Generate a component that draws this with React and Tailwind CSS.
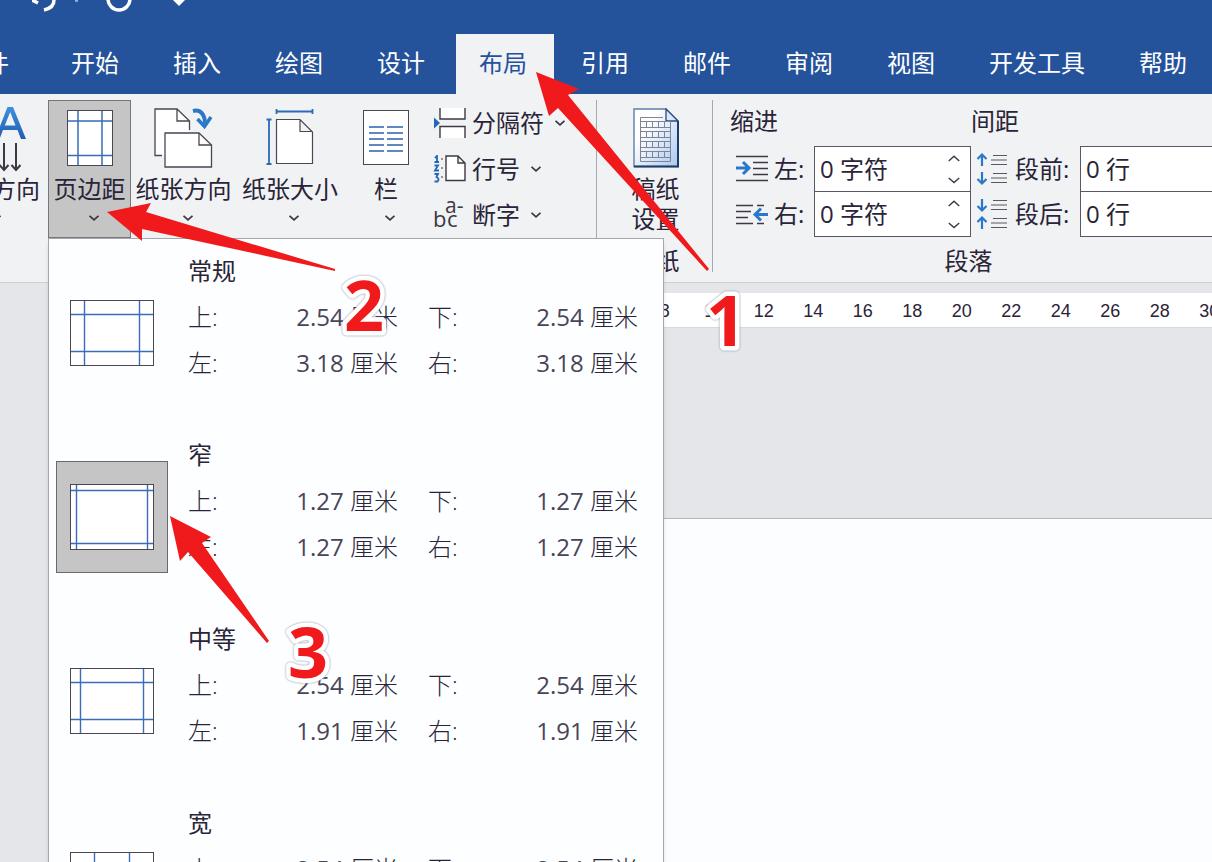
import { useState } from 'react';

const TABS = ['文件', '开始', '插入', '绘图', '设计', '布局', '引用', '邮件', '审阅', '视图', '开发工具', '帮助'];

// x / y are the distances of the guide lines from the thumbnail edges
const MARGINS = [
  { name: '常规', top: '2.54', bottom: '2.54', left: '3.18', right: '3.18', x: 14, y: 14 },
  { name: '窄', top: '1.27', bottom: '1.27', left: '1.27', right: '1.27', x: 6, y: 6 },
  { name: '中等', top: '2.54', bottom: '2.54', left: '1.91', right: '1.91', x: 10, y: 14 },
  { name: '宽', top: '2.54', bottom: '2.54', left: '5.08', right: '5.08', x: 24, y: 14 },
];

const RULER = [8, 10, 12, 14, 16, 18, 20, 22, 24, 26, 28, 30];

function Chevron({ up = false, wide = false }) {
  return (
    <svg width={wide ? 12 : 10} height={wide ? 7 : 6} viewBox="0 0 10 6" fill="none" stroke="#3c3844" strokeWidth={wide ? 1.2 : 1.8}>
      <path d={up ? 'M0.5 5.2 L5 1 L9.5 5.2' : 'M0.5 0.8 L5 4.8 L9.5 0.8'} />
    </svg>
  );
}

function TextDirectionIcon() {
  return (
    <svg width="60" height="66" viewBox="0 0 60 66" fill="none" overflow="visible">
      <defs>
        <linearGradient id="letter" x1="0" y1="0" x2="0" y2="1">
          <stop offset="0" stopColor="#3f8fdc" />
          <stop offset="1" stopColor="#1f5fb0" />
        </linearGradient>
      </defs>
      <path fillRule="evenodd" fill="url(#letter)" d="M33 34 L45.500 2 H51 L64 34 H59 L55.500 25 H41 L37.500 34 Z M42.800 20.500 H53.500 L48.200 7 Z" />
      <path d="M42 38 V65 M37.500 60 L42 65 L46.500 60 M54 38 V65 M49.500 60 L54 65 L58.500 60" stroke="#3c3844" strokeWidth="2" />
    </svg>
  );
}

function MarginsIcon() {
  return (
    <svg width="46" height="56" viewBox="0 0 46 56" fill="none">
      <rect x="0.500" y="0.500" width="45" height="55" fill="#fff" stroke="#4a4654" />
      <path d="M11 1 V55 M35 1 V55 M1 11 H45 M1 45.500 H45" stroke="#3a6cb8" strokeWidth="1.500" />
    </svg>
  );
}

function OrientationIcon() {
  return (
    <svg width="60" height="60" viewBox="0 0 60 60" fill="none" stroke="#4a4654" strokeWidth="1.300">
      <path d="M1.500 1.500 H23 L35 13 V24 H11 V47 H1.500 Z" fill="#fff" stroke="none" />
      <path d="M8 47.500 H1 V1 H23 L35.500 13 V22 M23 1 V13 H35.500" />
      <path d="M11 25 H45 L57.500 37 V59 H11 Z" fill="#fff" />
      <path d="M45 25 V37 H57.500" />
      <path d="M39 3 C47 1 51 7 51 16" stroke="#2b78c8" strokeWidth="4" />
      <path d="M43.500 11 L50.500 18.500 L57 9" stroke="#2b78c8" strokeWidth="3.500" />
    </svg>
  );
}

function PaperSizeIcon() {
  return (
    <svg width="48" height="56" viewBox="0 0 48 56" fill="none" overflow="visible">
      <path d="M10.500 9.500 H34 L46.500 22 V53.500 H10.500 Z M34 9.500 V21.500 H46.500" fill="#fff" stroke="#4a4654" strokeWidth="1.200" />
      <path d="M10.500 1.500 H46.500 M10.500 -1 V4 M46.500 -1 V4 M3 9.500 V54 M0.500 9.500 H5.500 M0.500 54 H5.500" stroke="#2b6cb8" strokeWidth="1.800" />
    </svg>
  );
}

function ColumnsIcon() {
  return (
    <svg width="46" height="56" viewBox="0 0 46 56" fill="none">
      <rect x="0.500" y="0.500" width="45" height="54" fill="#fff" stroke="#4a4654" />
      <path d="M6 17 H21 M24 17 H40 M6 23 H21 M24 23 H40 M6 29 H21 M24 29 H40 M6 35 H21 M24 35 H40 M6 41 H21 M24 41 H40" stroke="#2b62b0" strokeWidth="1.500" />
    </svg>
  );
}

function BreaksIcon() {
  return (
    <svg width="33" height="32" viewBox="0 0 33 32" fill="none">
      <path d="M7 1 V12 H32 V1 M7 31 V19.500 H32 V31" fill="#fff" stroke="#3c3844" strokeWidth="1.400" />
      <path d="M1 10.500 L7 16 L1 21.500 Z" fill="#2466b8" />
    </svg>
  );
}

function LineNumbersIcon() {
  return (
    <svg width="33" height="28" viewBox="0 0 33 28" fill="none">
      <path d="M13 1 H25 L32 8 V25.500 H13 Z M25 1 V8 H32" fill="#fff" stroke="#3c3844" strokeWidth="1.400" />
      <path d="M2 3 L4 1 V7 M1.500 7 H6 M1.500 10.500 H5 L2 15.500 H6 M1.500 19 H5 L3.500 22 Q7 24 4.500 26.500 H1.500" stroke="#2466b8" strokeWidth="1.800" />
      <path d="M9 3 V5 M9 12 V14 M9 21 V23" stroke="#3c3844" />
    </svg>
  );
}

function HyphenIcon() {
  return (
    <svg width="33" height="34" viewBox="0 0 33 34" fontFamily="Open Sans, sans-serif" fill="#3c3844">
      <text x="0" y="29" fontSize="22">b</text>
      <text x="14" y="29" fontSize="22">c</text>
      <text x="12" y="15" fontSize="21">a-</text>
    </svg>
  );
}

function ManuscriptIcon() {
  return (
    <svg width="46" height="60" viewBox="0 0 46 60" fill="none">
      <defs>
        <linearGradient id="sheet" x1="0" y1="0" x2="1" y2="1">
          <stop offset="0.3" stopColor="#ffffff" />
          <stop offset="1" stopColor="#a9c8f0" />
        </linearGradient>
      </defs>
      <path d="M1 1 H33 L45 13 V58.500 H1 Z" fill="url(#sheet)" stroke="#5f7ea8" strokeWidth="1.400" />
      <path d="M1 58.500 H45 V13" stroke="#1f3d6b" strokeWidth="2" />
      <path d="M33 1 V13 H45 Z" fill="#d9e8fb" stroke="#2c4a7a" strokeWidth="1.300" />
      <path
        d="M7.500 9.500 H30 M7.500 9.500 V53.500 H37.500 V14 M7 13.500 H38 M7 19.500 H38 M7 23.500 H38 M7 29.500 H38 M7 33.500 H38 M7 39.500 H38 M7 43.500 H38 M7 49.500 H38 M13.500 14 V19 M19.500 14 V19 M25.500 14 V19 M31.500 14 V19 M13.500 24 V29 M19.500 24 V29 M25.500 24 V29 M31.500 24 V29 M13.500 34 V39 M19.500 34 V39 M25.500 34 V39 M31.500 34 V39 M13.500 44 V49 M19.500 44 V49 M25.500 44 V49 M31.500 44 V49"
        stroke="#7c8496"
      />
    </svg>
  );
}

function IndentLeftIcon() {
  return (
    <svg width="32" height="28" viewBox="0 0 32 28" fill="none">
      <path d="M0 1.500 H32 M17 7.500 H32 M17 13.500 H32 M17 19.500 H32 M0 25.500 H32" stroke="#3c3844" strokeWidth="1.400" />
      <path d="M0 13 H12 M7 7 L13 13 L7 19" stroke="#2b78c8" strokeWidth="3" />
    </svg>
  );
}

function IndentRightIcon() {
  return (
    <svg width="32" height="24" viewBox="0 0 32 24" fill="none">
      <path d="M0 3.500 H17 M21 3.500 H28 M0 9.500 H15 M0 15.500 H12 M0 21.500 H17 M21 21.500 H28" stroke="#3c3844" strokeWidth="1.400" />
      <path d="M32 12.500 H20 M25 6.500 L19 12.500 L25 18.500" stroke="#2b78c8" strokeWidth="3" />
    </svg>
  );
}

function SpacingIcon({ after = false }) {
  return (
    <svg width="32" height="34" viewBox="0 0 32 34" fill="none">
      <path d="M17 3.500 H31 M15 8 H31 M15 12.500 H31 M17 21.500 H31 M15 26 H31 M15 30.500 H31" stroke="#5a5664" strokeWidth="1.200" />
      <path
        d={after
          ? 'M6 2 V14 M1.500 9 L6 13.500 L10.500 9 M6 32 V20 M1.500 25 L6 20.500 L10.500 25'
          : 'M6 14 V2 M1.500 7 L6 2.500 L10.500 7 M6 20 V32 M1.500 27 L6 31.500 L10.500 27'}
        stroke="#2b78c8"
        strokeWidth="2.200"
      />
    </svg>
  );
}

function BigButton({ icon, label, className, ...rest }) {
  return (
    <button type="button" className={`flex h-[138px] shrink-0 flex-col items-center border whitespace-nowrap ${className}`} {...rest}>
      <span className="flex h-[71px] items-center pt-[2px]">{icon}</span>
      <span className="leading-[34px]">{label}</span>
      <span className="flex h-[24px] items-center pl-2"><Chevron /></span>
    </button>
  );
}

function SmallButton({ icon, label }) {
  return (
    <button type="button" className="flex h-[46px] items-center whitespace-nowrap">
      <span className="mr-[6px]">{icon}</span>
      {label}
      <span className="ml-[11px]"><Chevron /></span>
    </button>
  );
}

function SpinField({ id, icon, label, value, labelClass }) {
  const [text, setText] = useState(value);
  return (
    <div className="flex h-[45px] items-center">
      {icon}
      <label htmlFor={id} className={`shrink-0 whitespace-nowrap ${labelClass}`}>{label}</label>
      <div className="flex h-[46px] w-[157px] shrink-0 self-start border border-[#5a5664] bg-white">
        <input
          id={id}
          value={text}
          onChange={e => setText(e.target.value)}
          className="w-[122px] bg-transparent pl-[5px] outline-none"
        />
        <div className="flex flex-1 flex-col">
          <button type="button" aria-label="增加" className="flex flex-1 items-center justify-center"><Chevron up wide /></button>
          <button type="button" aria-label="减少" className="flex flex-1 items-center justify-center"><Chevron wide /></button>
        </div>
      </div>
    </div>
  );
}

function PageThumb({ x, y }) {
  return (
    <svg width="84" height="66" viewBox="0 0 84 66" fill="none">
      <rect x="0.500" y="0.500" width="83" height="65" fill="#fff" stroke="#4a4654" />
      <path
        d={`M${x + 0.5} 1 V65 M${83.5 - x} 1 V65 M1 ${y + 0.5} H83 M1 ${65.5 - y} H83`}
        stroke="#3a6cb8"
        strokeWidth="1.400"
      />
    </svg>
  );
}

function Length({ value }) {
  return (
    <span className="text-right">
      <span className="font-normal text-[#4a4456]">{value}</span> 厘米
    </span>
  );
}

function MarginsMenu({ selected, onSelect }) {
  return (
    <div role="menu" className="absolute top-full left-0 z-10 w-[616px] border border-[#a6a6ac] bg-[#fdfeff] pt-[9px] shadow-md">
      {MARGINS.map(m => (
        <button
          key={m.name}
          type="button"
          role="menuitem"
          onClick={() => onSelect(m.name)}
          className="flex h-[184px] w-full items-start pl-[7px] text-left"
        >
          <span
            className={`mt-[29px] mr-[20px] flex size-[112px] items-center justify-center border ${
              m.name === selected ? 'border-[#6a6870] bg-[#c5c5c6]' : 'border-transparent'
            }`}
          >
            <PageThumb x={m.x} y={m.y} />
          </span>
          <span className="grid grid-cols-[60px_150px_90px_150px] leading-[46px] font-light">
            <span className="col-span-4 font-normal">{m.name}</span>
            <span>上:</span>
            <Length value={m.top} />
            <span className="pl-[30px]">下:</span>
            <Length value={m.bottom} />
            <span>左:</span>
            <Length value={m.left} />
            <span className="pl-[30px]">右:</span>
            <Length value={m.right} />
          </span>
        </button>
      ))}
    </div>
  );
}

function Annotations() {
  return (
    <svg className="pointer-events-none absolute inset-0 z-20 h-full w-full">
      <g fill="#f01a1c">
        <path d="M536 72 L579 89 L568 95 L709 269 L707 271 L558 108 L549 116 Z" />
        <path d="M107 212 L151 203 L146 212 L335 269 L335 271 L142 229 L142 241 Z" />
        <path d="M170 516 L211 537 L202 543 L269 641 L267 643 L188 552 L180 561 Z" />
      </g>
      <g
        className="drop-shadow-[0_0_1px_#8a90a8]"
        fontFamily="Open Sans, sans-serif"
        fontWeight="700"
        fontSize="70"
        fill="#f01a1c"
        stroke="#fff"
        strokeWidth="9"
        strokeLinejoin="round"
        paintOrder="stroke"
      >
        <text x="706" y="346">1</text>
        <text x="344" y="331">2</text>
        <text x="288" y="678">3</text>
      </g>
    </svg>
  );
}

export default function App() {
  const [tab, setTab] = useState('布局');
  const [margin, setMargin] = useState('窄');

  return (
    <div className="relative flex h-screen w-full flex-col overflow-hidden bg-[#e4e6e9] font-['Open_Sans','Noto_Sans_CJK_SC',sans-serif] text-[24px] text-[#2a2438]">
      <header className="shrink-0 bg-[#24539b] text-white">
        <div className="flex h-[34px] items-start pl-[32px]">
          <svg width="160" height="14" viewBox="0 0 160 14" fill="none" stroke="#fff" strokeWidth="3.500">
            <path d="M0 0 L6 3 M12 10 Q22 8 22 0" />
            <circle cx="87" cy="-1" r="11" />
            <path d="M141 0 L147 6 L153 0 Z" fill="#fff" stroke="none" />
            <path d="M43 0 H46" stroke="#9bb4dc" />
          </svg>
        </div>
        <nav className="-ml-[66px] flex h-[60px]">
          {TABS.map(t => (
            <button
              key={t}
              type="button"
              onClick={() => setTab(t)}
              className={`shrink-0 pr-[27px] pb-[2px] whitespace-nowrap first:mr-2 ${
                t === tab ? 'ml-1 bg-[#f1f2f4] pl-[23px] text-[#24509c]' : 'pl-[27px]'
              }`}
            >
              {t}
            </button>
          ))}
        </nav>
      </header>

      <section className="flex h-[189px] shrink-0 items-start border-b border-[#cdd1d5] bg-[#f1f2f4] pt-[6px]">
        <div className="-ml-[60px] flex h-[172px] w-[657px] shrink-0 border-r border-[#a9a8ae]">
          <BigButton icon={<TextDirectionIcon />} label="文字方向" className="mr-[4px] w-[104px] border-transparent" />
          <div className="relative h-[138px]">
            <BigButton
              icon={<MarginsIcon />}
              label="页边距"
              className="w-[83px] border-[#77767c] bg-[#c5c5c6]"
              aria-haspopup="menu"
              aria-expanded="true"
            />
            <MarginsMenu selected={margin} onSelect={setMargin} />
          </div>
          <BigButton icon={<OrientationIcon />} label="纸张方向" className="w-[105px] border-transparent" />
          <BigButton icon={<PaperSizeIcon />} label="纸张大小" className="w-[108px] border-transparent" />
          <BigButton icon={<ColumnsIcon />} label="栏" className="w-[84px] border-transparent" />
          <div className="ml-[5px]">
            <SmallButton icon={<BreaksIcon />} label="分隔符" />
            <SmallButton icon={<LineNumbersIcon />} label="行号" />
            <SmallButton icon={<HyphenIcon />} label="断字" />
          </div>
        </div>

        <div className="flex h-[172px] w-[116px] shrink-0 flex-col items-center border-r border-[#a9a8ae] pl-[2px]">
          <button type="button" className="flex h-[146px] shrink-0 flex-col items-center">
            <span className="flex h-[74px] shrink-0 items-center pt-[2px]"><ManuscriptIcon /></span>
            <span className="leading-[30px]">稿纸<br />设置</span>
          </button>
          <span className="shrink-0 leading-[30px]">稿纸</span>
        </div>

        <div className="flex w-[511px] shrink-0 flex-col">
          <div className="flex">
            <fieldset className="pl-[17px]">
              <legend className="h-[46px] leading-[42px]">缩进</legend>
              <div className="pl-[6px]">
                <SpinField id="indent-left" icon={<IndentLeftIcon />} label="左:" value="0 字符" labelClass="w-[46px] pl-[6px]" />
                <SpinField id="indent-right" icon={<IndentRightIcon />} label="右:" value="0 字符" labelClass="w-[46px] pl-[6px]" />
              </div>
            </fieldset>
            <fieldset>
              <legend className="h-[46px] leading-[42px]">间距</legend>
              <div className="pl-[5px]">
                <SpinField id="space-before" icon={<SpacingIcon />} label="段前:" value="0 行" labelClass="w-[72px] pl-[7px]" />
                <SpinField id="space-after" icon={<SpacingIcon after />} label="段后:" value="0 行" labelClass="w-[72px] pl-[7px]" />
              </div>
            </fieldset>
          </div>
          <span className="mt-[10px] text-center leading-[30px]">段落</span>
        </div>
      </section>

      <main className="flex flex-1 flex-col pt-[10px] pl-[640px]">
        <div className="-mr-[22px] flex h-[35px] shrink-0 items-center border-b border-[#d6d9dd] bg-white pt-[2px] font-['Liberation_Sans',sans-serif] text-[18px]">
          {RULER.map(n => (
            <span key={n} className="flex-1 text-center">{n}</span>
          ))}
        </div>
        <div className="mt-[190px] flex-1 border-t border-[#b4b6ba] bg-[#fcfdff]" />
      </main>

      <Annotations />
    </div>
  );
}
